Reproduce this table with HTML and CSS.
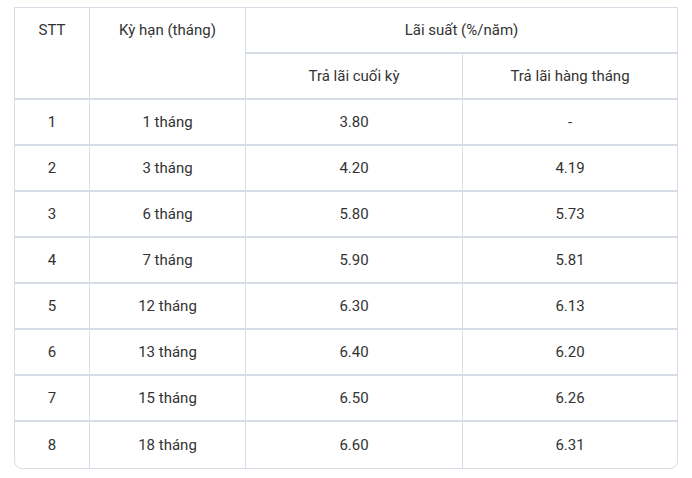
FILE: index.html
```html
<!DOCTYPE html>
<html lang="vi">
<head>
<meta charset="utf-8">
<link rel="stylesheet" href="styles.css">
</head>
<body>
<div class="rate-table">
  <div class="cell head span-rows">STT</div>
  <div class="cell head span-rows">Kỳ hạn (tháng)</div>
  <div class="cell head span-cols last-col">Lãi suất (%/năm)</div>
  <div class="cell head">Trả lãi cuối kỳ</div>
  <div class="cell head last-col">Trả lãi hàng tháng</div>

  <div class="cell">1</div><div class="cell">1 tháng</div><div class="cell">3.80</div><div class="cell last-col">-</div>
  <div class="cell">2</div><div class="cell">3 tháng</div><div class="cell">4.20</div><div class="cell last-col">4.19</div>
  <div class="cell">3</div><div class="cell">6 tháng</div><div class="cell">5.80</div><div class="cell last-col">5.73</div>
  <div class="cell">4</div><div class="cell">7 tháng</div><div class="cell">5.90</div><div class="cell last-col">5.81</div>
  <div class="cell">5</div><div class="cell">12 tháng</div><div class="cell">6.30</div><div class="cell last-col">6.13</div>
  <div class="cell">6</div><div class="cell">13 tháng</div><div class="cell">6.40</div><div class="cell last-col">6.20</div>
  <div class="cell">7</div><div class="cell">15 tháng</div><div class="cell">6.50</div><div class="cell last-col">6.26</div>
  <div class="cell last-row">8</div><div class="cell last-row">18 tháng</div><div class="cell last-row">6.60</div><div class="cell last-col last-row">6.31</div>
</div>
</body>
</html>
```
FILE: styles.css
```css
html, body {
  margin: 0;
  padding: 0;
  background: #ffffff;
}
body {
  padding: 7px 0 0 14px;
  font-family: Roboto, "Liberation Sans", sans-serif;
  font-size: 15px;
  color: #333333;
}
.rate-table {
  box-sizing: border-box;
  width: 664px;
  display: grid;
  grid-template-columns: 75px 156px 217px 214px;
  grid-auto-rows: 46px;
  border: 1px solid #d6dde7;
  border-radius: 0 0 8px 8px;
  overflow: hidden;
}
.cell {
  box-sizing: border-box;
  display: flex;
  align-items: center;
  justify-content: center;
  line-height: 20px;
  border-right: 1px solid #d6dde7;
  border-bottom: 2px solid #d6dde7;
  white-space: nowrap;
}
.cell.head.span-rows {
  grid-row: span 2;
  align-items: flex-start;
  padding-top: 12px;
}
.cell.span-cols {
  grid-column: span 2;
}
.cell.last-col {
  border-right: none;
}
.cell.last-row {
  border-bottom: none;
}
```
